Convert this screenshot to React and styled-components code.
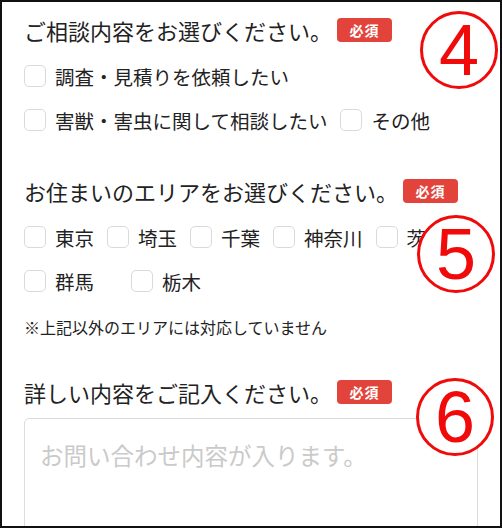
import React from 'react';
import styled, { createGlobalStyle } from 'styled-components';

const GlobalStyle = createGlobalStyle`
    html, body {
        margin: 0;
        padding: 0;
        background: #fff;
    }
    body {
        font-family: "Noto Sans CJK JP", "Noto Sans", sans-serif;
        color: #222;
    }
`

const topics = [
    ['調査・見積りを依頼したい'],
    ['害獣・害虫に関して相談したい', 'その他'],
];

const areas = [
    { name: '東京' },
    { name: '埼玉' },
    { name: '千葉' },
    { name: '神奈川' },
    { name: '茨城' },
    { name: '群馬', extra: 24 },
    { name: '栃木' },
];

function Check({ label, extra }) {
    return (
        <Option $extra={extra}>
            <Box type="checkbox" />
            <span>{label}</span>
        </Option>
    );
}

function Heading({ children }) {
    return (
        <HeadRow>
            <HeadText>{children}</HeadText>
            <Badge>必須</Badge>
        </HeadRow>
    );
}

function App() {
    return (
        <>
            <GlobalStyle />
            <Frame>
                <Section>
                    <Heading>ご相談内容をお選びください。</Heading>
                    <Options>
                        {topics.map((row, i) => (
                            <OptionRow key={i}>
                                {row.map(t => <Check key={t} label={t} />)}
                            </OptionRow>
                        ))}
                    </Options>
                    <Marker $top={-4} $right={-20}>4</Marker>
                </Section>

                <Section>
                    <Heading>お住まいのエリアをお選びください。</Heading>
                    <Options>
                        <OptionRow $wrap>
                            {areas.map(a => <Check key={a.name} label={a.name} extra={a.extra} />)}
                        </OptionRow>
                    </Options>
                    <Note>※上記以外のエリアには対応していません</Note>
                    <Marker $top={39} $right={-17}>5</Marker>
                </Section>

                <Section>
                    <Heading>詳しい内容をご記入ください。</Heading>
                    <TextArea placeholder="お問い合わせ内容が入ります。" />
                    <Marker $top={1} $right={-16}>6</Marker>
                </Section>
            </Frame>
        </>
    );
}

export default App;

const Frame = styled.div`
    position: relative;
    box-sizing: border-box;
    width: 502px;
    height: 528px;
    padding: 13px 22px 0 22px;
    border: 2px solid #111;
    overflow: hidden;
    background: #fff;
    display: flex;
    flex-direction: column;
    gap: 39px;
`

const Section = styled.section`
    position: relative;
    display: flex;
    flex-direction: column;
`

const HeadRow = styled.div`
    display: flex;
    align-items: center;
    height: 30px;
`

const HeadText = styled.h2`
    margin: 0;
    font-size: 22px;
    font-weight: 400;
    line-height: 30px;
    color: #222;
    white-space: nowrap;
`

const Badge = styled.span`
    display: inline-flex;
    align-items: center;
    justify-content: center;
    box-sizing: border-box;
    width: 55px;
    height: 24px;
    margin-left: 5px;
    border-radius: 4px;
    background: #e2443b;
    color: #fff;
    font-size: 14px;
    font-weight: 700;
    letter-spacing: 1px;
`

const Options = styled.div`
    display: flex;
    flex-direction: column;
    gap: 10px;
    margin-top: 14px;
`

const OptionRow = styled.div`
    display: flex;
    flex-wrap: ${p => (p.$wrap ? 'wrap' : 'nowrap')};
    column-gap: 13px;
    row-gap: 10px;
`

const Option = styled.label`
    display: flex;
    align-items: center;
    gap: 9px;
    height: 34px;
    margin-right: ${p => p.$extra || 0}px;
    font-size: 19.5px;
    color: #222;
    white-space: nowrap;
`

const Box = styled.input`
    appearance: none;
    box-sizing: border-box;
    width: 22px;
    height: 22px;
    margin: 0;
    border: 1.5px solid #dadada;
    border-radius: 5px;
    background: #fff;
`

const Note = styled.p`
    margin: 18px 0 0 0;
    font-size: 16px;
    line-height: 22px;
    color: #222;
    white-space: nowrap;
`

const TextArea = styled.textarea`
    box-sizing: border-box;
    width: 100%;
    height: 160px;
    margin-top: 11px;
    padding: 19px 15px;
    border: 1px solid #dcdcdc;
    border-radius: 5px;
    resize: none;
    font-family: "Noto Sans CJK JP", sans-serif;
    font-size: 23.5px;
    line-height: 34px;
    color: #222;

    &::placeholder {
        color: #cacaca;
    }
`

// red circled numbers drawn over the screenshot
const Marker = styled.div`
    position: absolute;
    top: ${p => p.$top}px;
    right: ${p => p.$right}px;
    box-sizing: border-box;
    width: 78px;
    height: 78px;
    border: 3px solid #f00a0a;
    border-radius: 50%;
    background: #fff;
    display: flex;
    align-items: center;
    justify-content: center;
    color: #f00a0a;
    font-family: "Liberation Sans", Arial, sans-serif;
    font-size: 72px;
    line-height: 1;
`
